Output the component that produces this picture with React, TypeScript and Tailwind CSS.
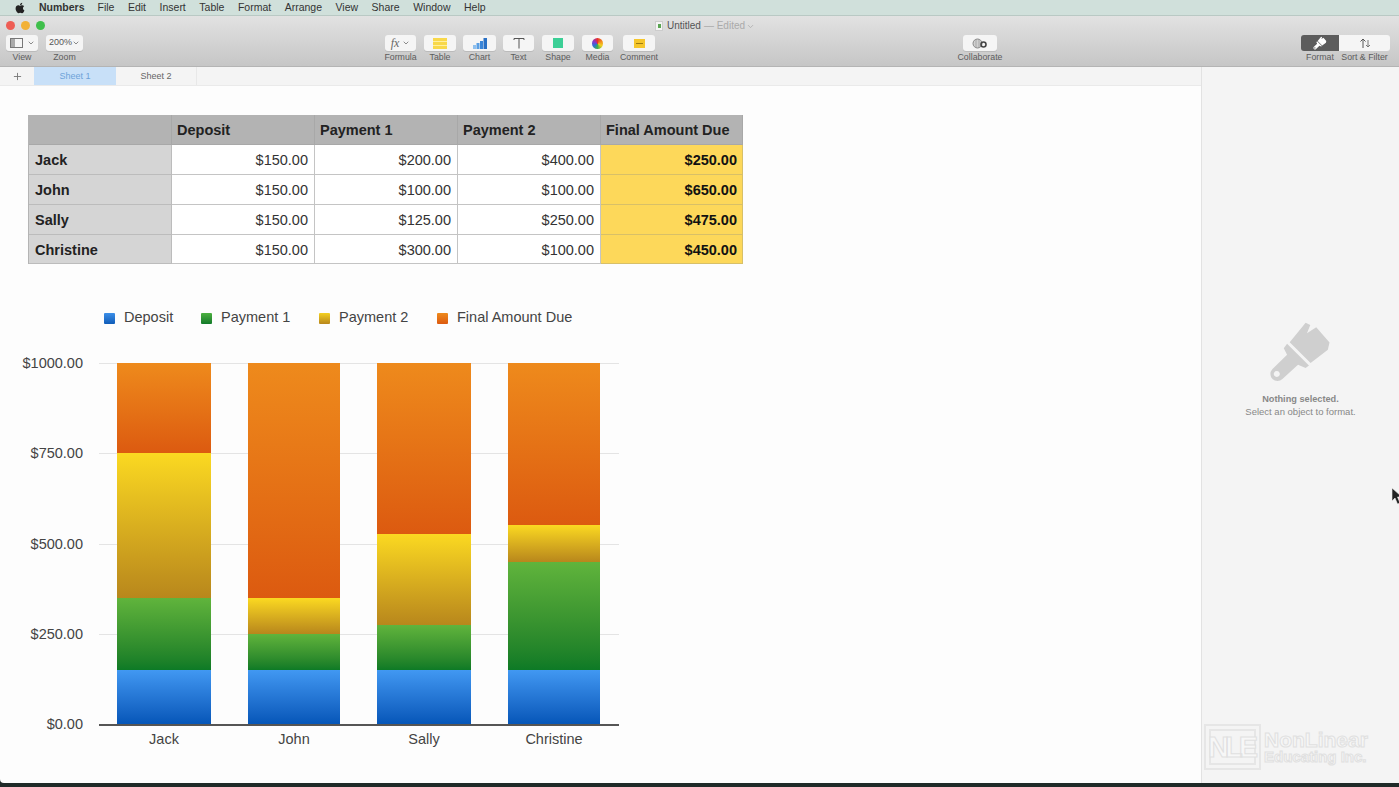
import React from "react";
import { FaApple } from "react-icons/fa";
import { ChevronDown, Plus } from "lucide-react";

const menus = ["File", "Edit", "Insert", "Table", "Format", "Arrange", "View", "Share", "Window", "Help"];

const rows = [
	{ name: "Jack", deposit: 150, p1: 200, p2: 400, final: 250 },
	{ name: "John", deposit: 150, p1: 100, p2: 100, final: 650 },
	{ name: "Sally", deposit: 150, p1: 125, p2: 250, final: 475 },
	{ name: "Christine", deposit: 150, p1: 300, p2: 100, final: 450 },
];

const money = (v: number) => "$" + v.toFixed(2);

const BrushIcon = ({ className, fill }: { className: string; fill: string }) => (
	<svg viewBox="205 60 195 190" className={className} fill={fill}>
		<path d="M318 68 L332 75 L322 100 L350 82 L390 128 L385 150 L333 190 L270 127 Z" />
		<path fillRule="evenodd" d="M262 132 L328 197 L318 205 L295 195 L248 238 A20 20 0 1 1 218 208 L262 165 L252 145 Z M231 214 a9 9 0 1 0 0.01 0 Z" />
	</svg>
);

const ToolItem = ({ label, w, className = "", children }: { label: string; w: number; className?: string; children: React.ReactNode }) => (
	<div className={`flex flex-col items-center ${className}`} style={{ width: w }}>
		<div className="w-full h-[16px] bg-[#f5f5f5] rounded-[3px] flex items-center justify-center shadow-[0_1px_0_#bbbbbb]">
			{children}
		</div>
		<span className="mt-[1px] text-[8.8px] leading-[11px] whitespace-nowrap text-[#5c5c5c]">{label}</span>
	</div>
);

const Segment = ({ value, className }: { value: number; className: string }) => (
	<div className={className} style={{ height: value * 0.361 }} />
);

const Legend = ({ label, swatch, className }: { label: string; swatch: string; className: string }) => (
	<div className={`flex items-center gap-[9px] ${className}`}>
		<div className={`w-[11px] h-[11px] rounded-[1px] bg-linear-to-b ${swatch}`} />
		<span className="text-[14.5px] text-[#444]">{label}</span>
	</div>
);

export default function App() {
	return (
		<div className="relative w-[1399px] h-[787px] overflow-hidden flex flex-col bg-[#1f2a28] font-['Liberation_Sans',Arial,sans-serif]">
			{/* menu bar */}
			<div className="h-[16px] shrink-0 bg-[#d0e0db] border-b border-[#b9c9c4] flex items-center pl-[14px] text-[10.5px] text-[#333]">
				<FaApple className="text-[12px] text-[#222]" />
				<span className="ml-[13px] mr-[13px] font-bold">Numbers</span>
				<div className="flex gap-[13.5px]">
					{menus.map((m) => (
						<span key={m}>{m}</span>
					))}
				</div>
			</div>

			{/* title bar and toolbar */}
			<div className="h-[51px] shrink-0 bg-linear-to-b from-[#e2e2e2] to-[#c6c6c6] border-b border-[#b4b4b4]">
				<div className="h-[19px] relative flex items-center pl-[6px] gap-[6px]">
					<div className="w-[9px] h-[9px] rounded-full bg-[#ee5d55]" />
					<div className="w-[9px] h-[9px] rounded-full bg-[#f2b136]" />
					<div className="w-[9px] h-[9px] rounded-full bg-[#3fbf4b]" />
					<div className="absolute left-[655px] top-[4px] flex items-center text-[10px] leading-[12px] text-[#555]">
						<div className="w-[8px] h-[10px] bg-[#f4f4f4] border border-[#ccc] flex items-center justify-center mr-[4px]">
							<div className="w-[3px] h-[4px] bg-[#5aa552]" />
						</div>
						<span>Untitled</span>
						<span className="ml-[3px] text-[#aaa]">— Edited</span>
						<ChevronDown size={9} className="ml-[1px] text-[#aaa]" />
					</div>
				</div>
				<div className="flex pl-[6px]">
					<ToolItem label="View" w={32}>
						<div className="w-[13px] h-[10px] border border-[#777] flex mr-[4px]">
							<div className="w-[4px] bg-[#aaa]" />
						</div>
						<ChevronDown size={8} className="text-[#555]" />
					</ToolItem>
					<ToolItem label="Zoom" w={37} className="ml-[8px]">
						<span className="text-[9px] text-[#555]">200%</span>
						<ChevronDown size={8} className="text-[#555]" />
					</ToolItem>
					<ToolItem label="Formula" w={31} className="ml-[302px]">
						<span className="text-[12px] italic text-[#666] font-['Liberation_Serif',serif] mr-[3px]">fx</span>
						<ChevronDown size={8} className="text-[#555]" />
					</ToolItem>
					<ToolItem label="Table" w={32} className="ml-[8px]">
						<div className="w-[14px] h-[11px] bg-[#f8d84a] flex flex-col justify-evenly">
							<div className="h-px bg-[#fff0a0]" />
							<div className="h-px bg-[#fff0a0]" />
						</div>
					</ToolItem>
					<ToolItem label="Chart" w={33} className="ml-[7px]">
						<svg viewBox="0 0 14 11" className="w-[14px] h-[11px]">
							<rect x="0" y="7" width="3" height="4" fill="#8fc0ee" />
							<rect x="3.5" y="5" width="3" height="6" fill="#5a9fe4" />
							<rect x="7" y="3" width="3" height="8" fill="#3a85d8" />
							<rect x="10.5" y="0" width="3.5" height="11" fill="#2a70c4" />
						</svg>
					</ToolItem>
					<ToolItem label="Text" w={31} className="ml-[7px]">
						<svg viewBox="0 0 12 12" className="w-[12px] h-[12px]" fill="none" stroke="#555" strokeWidth="1">
							<path d="M1 1.5h10M6 1.5v10M1 1.5v1.5M11 1.5v1.5" />
						</svg>
					</ToolItem>
					<ToolItem label="Shape" w={32} className="ml-[8px]">
						<div className="w-[10px] h-[10px] bg-[#3ccf96]" />
					</ToolItem>
					<ToolItem label="Media" w={31} className="ml-[8px]">
						<div className="w-[11px] h-[11px] rounded-full bg-[conic-gradient(#e8302c,#f28a1c,#f4d020,#3cb04c,#2d6fd8,#8a35c8,#e8302c)]" />
					</ToolItem>
					<ToolItem label="Comment" w={32} className="ml-[10px]">
						<div className="w-[11px] h-[9px] bg-[#f5c62c] flex items-center justify-center">
							<div className="w-[7px] h-px bg-[#9c7a10]" />
						</div>
					</ToolItem>
					<ToolItem label="Collaborate" w={34} className="ml-[308px]">
						<svg viewBox="0 0 16 11" className="w-[16px] h-[11px]" fill="none">
							<circle cx="5.5" cy="5.5" r="4.5" fill="#d0d0d0" stroke="#888" />
							<path d="M4 1.5v8M7 1.5v8" stroke="#999" strokeWidth="0.7" />
							<circle cx="11.5" cy="6.5" r="2.5" stroke="#444" strokeWidth="1.6" />
						</svg>
					</ToolItem>
					<div className="ml-[304px] flex flex-col">
						<div className="flex h-[16px]">
							<div className="w-[38px] bg-[#5c5c5c] rounded-l-[3px] flex items-center justify-center">
								<BrushIcon className="w-[14px] h-[14px]" fill="#ffffff" />
							</div>
							<div className="w-[51px] bg-[#f5f5f5] rounded-r-[3px] flex items-center justify-center">
								<svg viewBox="0 0 12 12" className="w-[12px] h-[12px]" fill="none" stroke="#555" strokeWidth="1">
									<path d="M4 11V2M1.5 4.5L4 2l2.5 2.5" />
									<path d="M9 3v7M7 8l2 2 2-2" stroke="#777" />
								</svg>
							</div>
						</div>
						<div className="flex mt-[1px] text-[8.8px] leading-[11px] text-[#5c5c5c]">
							<span className="w-[38px] text-center">Format</span>
							<span className="w-[51px] text-center whitespace-nowrap">Sort &amp; Filter</span>
						</div>
					</div>
				</div>
			</div>

			{/* body */}
			<div className="flex h-[716px] shrink-0">
				<div className="w-[1201px] bg-[#fdfdfd] rounded-bl-[4px] flex flex-col">
					{/* sheet tabs */}
					<div className="h-[19px] shrink-0 bg-[#f4f4f4] border-b border-[#eaeaea] flex text-[9px]">
						<div className="w-[34px] flex items-center justify-center text-[#777]">
							<Plus size={11} />
						</div>
						<div className="w-[82px] pt-[1px] bg-[#c8e0f8] text-[#6ea3d8] flex items-center justify-center">Sheet 1</div>
						<div className="w-[81px] pt-[1px] border-r border-[#e8e8e8] text-[#666] flex items-center justify-center">Sheet 2</div>
					</div>

					<div className="pl-[28px] pt-[29px]">
						{/* table */}
						<div className="w-[715px] grid grid-cols-[143px_143px_143px_143px_142px] border-l border-[#b4b4b4] text-[14.5px] text-[#222]">
							<div className="h-[30px] bg-[#b3b3b3] border-r border-b border-[#a8a8a8]" />
							{["Deposit", "Payment 1", "Payment 2", "Final Amount Due"].map((h) => (
								<div key={h} className="h-[30px] pt-[2px] bg-[#b3b3b3] border-r border-b border-[#a8a8a8] pl-[5px] font-bold flex items-center whitespace-nowrap">
									{h}
								</div>
							))}
							{rows.map((r, idx) => {
								const last = idx === 3;
								const h = last ? "h-[29px]" : "h-[30px]";
								const namePad = last ? "pt-[3px]" : "pt-[2px]";
								const valuePad = last ? "pt-[4px]" : "pt-[3px]";
								return (
									<React.Fragment key={r.name}>
										<div className={`${h} ${namePad} bg-[#d5d5d5] border-r border-b border-[#bcbcbc] px-[6px] font-bold flex items-center`}>{r.name}</div>
										{[r.deposit, r.p1, r.p2].map((v, i) => (
											<div key={i} className={`${h} ${valuePad} bg-white border-r border-b border-[#c4c4c4] px-[6px] flex items-center justify-end text-[#333]`}>
												{money(v)}
											</div>
										))}
										<div className={`${h} ${valuePad} bg-[#fdd85a] border-r border-b border-[#d8c068] pr-[5px] font-bold flex items-center justify-end text-[#111]`}>
											{money(r.final)}
										</div>
									</React.Fragment>
								);
							})}
						</div>

						{/* legend */}
						<div className="mt-[44px] h-[20px] flex items-center pl-[76px]">
							<Legend label="Deposit" swatch="from-[#3b8fe8] to-[#0f5cb8]" className="w-[97px]" />
							<Legend label="Payment 1" swatch="from-[#4cb040] to-[#0f7a2a]" className="w-[118px]" />
							<Legend label="Payment 2" swatch="from-[#f4d020] to-[#b8871c]" className="w-[118px]" />
							<Legend label="Final Amount Due" swatch="from-[#ee8a1c] to-[#dc5a10]" className="" />
						</div>

						{/* chart */}
						<div className="mt-[35px] flex">
							<div className="w-[55px] h-[361px] flex flex-col justify-between text-[14.5px] text-[#444]">
								{["$1000.00", "$750.00", "$500.00", "$250.00", "$0.00"].map((t) => (
									<div key={t} className="h-0 flex items-center justify-end whitespace-nowrap translate-y-px">{t}</div>
								))}
							</div>
							<div className="ml-[16px] w-[520px]">
								<div className="relative h-[361px] border-b-2 border-[#555] box-content -mb-[2px]">
									<div className="absolute inset-0 flex flex-col justify-between">
										{[0, 1, 2, 3].map((i) => (
											<div key={i} className="h-px bg-[#e4e4e4]" />
										))}
										<div className="h-0" />
									</div>
									<div className="relative flex pl-[18px] gap-[37px]">
										{rows.map((r, i) => (
											<div key={r.name} className={i % 2 === 0 ? "w-[94px]" : "w-[92px]"}>
												<Segment value={r.final} className="bg-linear-to-b from-[#ee8a1c] to-[#dc5a10]" />
												<Segment value={r.p2} className="bg-linear-to-b from-[#fbd921] to-[#b8871c]" />
												<Segment value={r.p1} className="bg-linear-to-b from-[#60b43c] to-[#0c7a26]" />
												<Segment value={r.deposit} className="bg-linear-to-b from-[#4198f2] to-[#0556b8]" />
											</div>
										))}
									</div>
								</div>
								<div className="flex pl-[18px] gap-[37px] mt-[5px] text-[14.5px] text-[#444]">
									{rows.map((r, i) => (
										<div key={r.name} className={`text-center ${i % 2 === 0 ? "w-[94px]" : "w-[92px]"}`}>
											{r.name}
										</div>
									))}
								</div>
							</div>
						</div>
					</div>
				</div>

				{/* inspector */}
				<div className="relative flex-1 bg-[#f4f4f4] border-l border-[#e2e2e2] flex flex-col items-center pt-[253px]">
					<BrushIcon className="w-[65px] h-[63px]" fill="#cfcfcf" />
					<div className="mt-[10px] text-[9.2px] leading-[13px] font-bold text-[#888]">Nothing selected.</div>
					<div className="text-[9.5px] leading-[12px] text-[#888]">Select an object to format.</div>

					{/* cursor */}
					<svg viewBox="0 0 12 18" className="absolute left-[189px] top-[420px] w-[12px] h-[18px]">
						<path d="M1 1 L1 14 L4 11 L6.5 17 L9 16 L6.5 10 L11 10 Z" fill="#222" stroke="#eee" strokeWidth="0.6" />
					</svg>

					{/* watermark */}
					<div className="absolute left-[2px] top-[657px] flex items-center">
						<div className="w-[57px] h-[46px] border-2 border-[#e6e6e6] flex items-center justify-center">
							<div className="w-[47px] h-[36px] border-2 border-[#e6e6e6] flex items-center justify-center text-[29px] leading-none tracking-[-4px] pr-[3px] font-bold text-[#f7f7f7] [-webkit-text-stroke:1px_#e0e0e0]">
								NLE
							</div>
						</div>
						<div className="ml-[3px] flex flex-col text-[#f7f7f7] font-bold [-webkit-text-stroke:1px_#e0e0e0]">
							<span className="text-[21px] leading-[20px]">NonLinear</span>
							<span className="text-[15px] leading-[14px]">Educating Inc.</span>
						</div>
					</div>
				</div>
			</div>
		</div>
	);
}
